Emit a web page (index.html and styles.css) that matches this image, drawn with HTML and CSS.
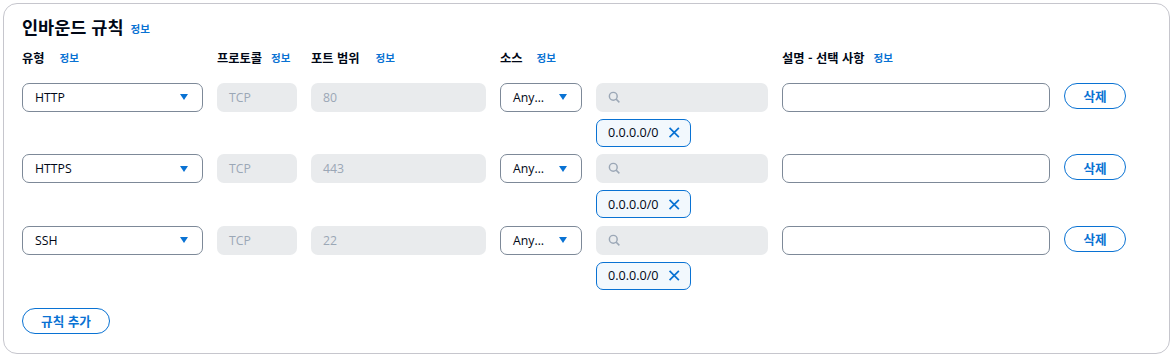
FILE: index.html
```html
<!DOCTYPE html>
<html lang="ko">
<head>
<meta charset="utf-8">
<link rel="stylesheet" href="styles.css">
</head>
<body>
<section class="card">
  <h2 class="title">인바운드 규칙 <a class="info">정보</a></h2>
  <div class="grid">
    <div class="hd"><span>유형</span><a class="info type-info">정보</a></div>
    <div class="hd"><span>프로토콜</span><a class="info">정보</a></div>
    <div class="hd"><span>포트 범위</span><a class="info port-info">정보</a></div>
    <div class="hd"><span>소스</span><a class="info src-info">정보</a></div>
    <div class="hd"></div>
    <div class="hd"><span>설명 - 선택 사항</span><a class="info">정보</a></div>
    <div class="hd"></div>

    <div class="cell"><div class="select"><span>HTTP</span><i class="caret"></i></div></div>
    <div class="cell"><div class="field disabled">TCP</div></div>
    <div class="cell"><div class="field disabled">80</div></div>
    <div class="cell"><div class="select"><span>Any…</span><i class="caret"></i></div></div>
    <div class="cell">
      <div class="field search"><svg viewBox="0 0 16 16" class="mag"><circle cx="6.5" cy="6.5" r="4.8"/><path d="M10 10l4 4"/></svg></div>
      <div class="chip">0.0.0.0/0<svg viewBox="0 0 16 16" class="x"><path d="M2 2l12 12M14 2L2 14"/></svg></div>
    </div>
    <div class="cell"><div class="field text"></div></div>
    <div class="cell"><button class="btn">삭제</button></div>

    <div class="cell"><div class="select"><span>HTTPS</span><i class="caret"></i></div></div>
    <div class="cell"><div class="field disabled">TCP</div></div>
    <div class="cell"><div class="field disabled">443</div></div>
    <div class="cell"><div class="select"><span>Any…</span><i class="caret"></i></div></div>
    <div class="cell">
      <div class="field search"><svg viewBox="0 0 16 16" class="mag"><circle cx="6.5" cy="6.5" r="4.8"/><path d="M10 10l4 4"/></svg></div>
      <div class="chip">0.0.0.0/0<svg viewBox="0 0 16 16" class="x"><path d="M2 2l12 12M14 2L2 14"/></svg></div>
    </div>
    <div class="cell"><div class="field text"></div></div>
    <div class="cell"><button class="btn">삭제</button></div>

    <div class="cell"><div class="select"><span>SSH</span><i class="caret"></i></div></div>
    <div class="cell"><div class="field disabled">TCP</div></div>
    <div class="cell"><div class="field disabled">22</div></div>
    <div class="cell"><div class="select"><span>Any…</span><i class="caret"></i></div></div>
    <div class="cell">
      <div class="field search"><svg viewBox="0 0 16 16" class="mag"><circle cx="6.5" cy="6.5" r="4.8"/><path d="M10 10l4 4"/></svg></div>
      <div class="chip">0.0.0.0/0<svg viewBox="0 0 16 16" class="x"><path d="M2 2l12 12M14 2L2 14"/></svg></div>
    </div>
    <div class="cell"><div class="field text"></div></div>
    <div class="cell"><button class="btn">삭제</button></div>
  </div>
  <button class="btn add">규칙 추가</button>
</section>
</body>
</html>
```
FILE: styles.css
```css
* { box-sizing: border-box; }
html, body { margin: 0; padding: 0; background: #fff; }
body {
  font-family: "Open Sans", "Noto Sans CJK KR", sans-serif;
  font-size: 12.25px;
  color: #000716;
}
.card {
  margin: 3px;
  width: 1167px;
  height: 351px;
  border: 1px solid #c6c6cd;
  border-radius: 14px;
  padding: 11px 18px 0 18px;
}
.title {
  margin: 0;
  font-family: "Noto Sans CJK KR", sans-serif;
  font-size: 17.5px;
  font-weight: 700;
  line-height: 24px;
  display: flex;
  align-items: center;
  gap: 7px;
}
.info {
  font-family: "Noto Sans CJK KR", sans-serif;
  font-size: 10.5px;
  font-weight: 700;
  color: #0972d3;
  line-height: 14px;
}
.title .info { margin-top: 3px; }
.grid {
  display: grid;
  grid-template-columns: 181px 80px 175px 82px 172px 268px 62px;
  column-gap: 14px;
  row-gap: 7.5px;
  margin-top: 9px;
}
.hd {
  display: flex;
  align-items: center;
  gap: 9px;
  height: 20px;
  font-family: "Noto Sans CJK KR", sans-serif;
  font-weight: 700;
  font-size: 12.25px;
  margin-bottom: 7px;
}
.hd .type-info { margin-left: 6px; }
.hd .port-info { margin-left: 7px; }
.hd .src-info { margin-left: 5px; }
.cell {
  display: flex;
  flex-direction: column;
  align-items: flex-start;
  gap: 7px;
}
.select, .field {
  width: 100%;
  height: 29px;
  border-radius: 7px;
  display: flex;
  align-items: center;
  padding: 0 12px;
}
.select {
  border: 1px solid #7d8998;
  justify-content: space-between;
  padding-right: 14px;
}
.caret {
  width: 0; height: 0;
  border-left: 4.5px solid transparent;
  border-right: 4.5px solid transparent;
  border-top: 6px solid #0972d3;
}
.disabled, .search {
  background: #e9ebed;
  color: #9ba7b6;
}
.text { border: 1px solid #7d8998; }
.mag {
  width: 13px; height: 13px;
  fill: none; stroke: #9ba7b6; stroke-width: 1.8;
}
.chip {
  height: 28px;
  width: 95px;
  border: 1px solid #0972d3;
  background: #f2f8fd;
  border-radius: 7px;
  display: flex;
  align-items: center;
  padding: 0 10px 0 11px;
  gap: 9px;
  font-size: 12.6px;
}
.x {
  width: 13px; height: 13px;
  fill: none; stroke: #0972d3; stroke-width: 2.2;
}
.btn {
  height: 26px;
  border: 1px solid #0972d3;
  background: #fff;
  border-radius: 14px;
  font-family: "Noto Sans CJK KR", sans-serif;
  font-size: 12.6px;
  font-weight: 700;
  color: #0972d3;
  padding: 0;
  width: 62px;
  cursor: pointer;
}
.add {
  width: 88px;
  margin-top: 18px;
}
```
